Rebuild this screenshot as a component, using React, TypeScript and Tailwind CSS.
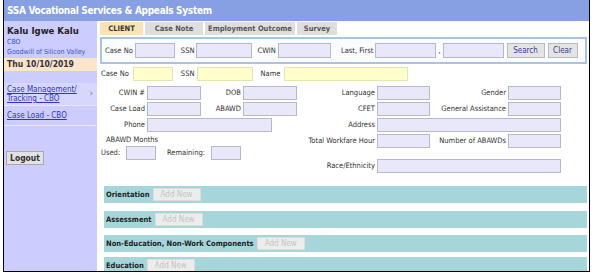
import React from "react";

const font = { fontFamily: '"DejaVu Sans Condensed", "Liberation Sans Narrow", "Liberation Sans", sans-serif' };

function Field({ w, h = "h-[14px]", yellow = false }: { w: string; h?: string; yellow?: boolean }) {
  return (
    <div
      className={`${w} ${h} border ${
        yellow ? "border-[#e8e4b0] bg-[#ffffcc]" : "border-[#b8b8cc] bg-[#e8e8fa]"
      }`}
    />
  );
}

function Row({ label, lw, fw, gap = "mr-[2px]" }: { label: string; lw: string; fw: string; gap?: string }) {
  return (
    <div className="flex items-center">
      <span className={`${lw} ${gap} text-right`}>{label}</span>
      <Field w={fw} />
    </div>
  );
}

const sections = [
  { name: "Orientation", mt: "mt-[13px]" },
  { name: "Assessment", mt: "mt-[8px]" },
  { name: "Non-Education, Non-Work Components", mt: "mt-[7px]" },
  { name: "Education", mt: "mt-[5px]" },
];

export default function App() {
  return (
    <div className="h-[275px] w-[595px] overflow-hidden bg-white" style={font}>
      <div className="ml-[3px] flex h-[272px] w-[587px] flex-col overflow-hidden border-x border-b border-black">
        <div className="flex h-[21px] shrink-0 items-center bg-[#879fe3] pl-[3px] text-[10px] font-bold tracking-[-0.3px] text-white">
          SSA Vocational Services &amp; Appeals System
        </div>

        <div className="flex flex-1">
          {/* sidebar */}
          <aside className="flex w-[93px] shrink-0 flex-col bg-[#ccccff] text-[#222]">
            <div className="pl-[3px] pt-[4px] text-[9.5px] font-bold leading-[12px]">Kalu Igwe Kalu</div>
            <div className="pl-[3px] text-[7px] leading-[10px] text-[#3355cc]">CBO</div>
            <div className="pl-[3px] text-[7px] leading-[10px] text-[#3355cc]">Goodwill of Silicon Valley</div>
            <div className="mt-[1px] h-[13px] bg-[#fde5c9] pl-[3px] text-[8.5px] font-bold leading-[13px] text-[#333]">
              Thu 10/10/2019
            </div>
            <div className="mt-[12px] flex items-center border-b border-[#e6e6ff] bg-[#d6d6ff] py-[2px] pl-[3px] pr-[4px]">
              <div className="flex-1 text-[8px] leading-[9px] text-[#3333cc] underline">
                Case Management/
                <br />
                Tracking - CBO
              </div>
              <span className="text-[9px] text-[#777]">›</span>
            </div>
            <div className="border-b border-[#e6e6ff] py-[5px] pl-[3px] text-[8px] leading-[9px] text-[#3333cc] underline">
              Case Load - CBO
            </div>
            <div className="ml-[2px] mt-[25px] flex h-[14px] w-[38px] items-center justify-center border border-[#aaa] bg-[#e2e2e2] text-[8.5px] font-bold text-[#333]">
              Logout
            </div>
          </aside>

          {/* main */}
          <main className="ml-[3px] flex-1 text-[7.5px] text-[#333]">
            <div className="mt-[1px] flex gap-[2px] text-[7.5px] font-bold">
              <div className="flex h-[13px] w-[43px] items-center justify-center bg-[#fce3b6] text-[#333]">CLIENT</div>
              <div className="flex h-[13px] w-[58px] items-center justify-center bg-[#dedede] text-[#555]">Case Note</div>
              <div className="flex h-[13px] w-[90px] items-center justify-center bg-[#dedede] text-[#555]">Employment Outcome</div>
              <div className="flex h-[13px] w-[40px] items-center justify-center bg-[#dedede] text-[#555]">Survey</div>
            </div>

            <div className="mr-[2px] mt-[2px] flex h-[27px] items-center border-2 border-[#a9c3e6] bg-[#fbfcff] pl-[3px]">
              <span className="mr-[2px]">Case No</span>
              <Field w="w-[40px]" h="h-[15px]" />
              <span className="ml-[6px] mr-[2px]">SSN</span>
              <Field w="w-[56px]" h="h-[15px]" />
              <span className="ml-[5px] mr-[2px]">CWIN</span>
              <Field w="w-[53px]" h="h-[15px]" />
              <span className="ml-[10px] mr-[2px]">Last, First</span>
              <Field w="w-[61px]" h="h-[15px]" />
              <span className="mx-[2px]">,</span>
              <Field w="w-[61px]" h="h-[15px]" />
              <div className="ml-[3px] flex h-[15px] w-[38px] items-center justify-center border border-[#bbb] bg-[#e4e4e4] text-[8px] text-[#3a3a99]">
                Search
              </div>
              <div className="ml-[3px] flex h-[15px] w-[30px] items-center justify-center border border-[#bbb] bg-[#e4e4e4] text-[8px] text-[#3a3a99]">
                Clear
              </div>
            </div>

            <div className="mt-[3px] flex items-center">
              <span className="ml-[1px] mr-[4px]">Case No</span>
              <Field w="w-[40px]" yellow />
              <span className="ml-[8px] mr-[3px]">SSN</span>
              <Field w="w-[56px]" yellow />
              <span className="ml-[7px] mr-[4px]">Name</span>
              <Field w="w-[124px]" yellow />
            </div>

            <div className="mt-[5px] flex">
              <div className="flex w-[200px] flex-col gap-[2px]">
                <div className="flex">
                  <Row label="CWIN #" lw="w-[45px]" fw="w-[54px]" />
                  <Row label="DOB" lw="w-[40px]" fw="w-[54px]" />
                </div>
                <div className="flex">
                  <Row label="Case Load" lw="w-[45px]" fw="w-[54px]" />
                  <Row label="ABAWD" lw="w-[40px]" fw="w-[54px]" />
                </div>
                <Row label="Phone" lw="w-[45px]" fw="w-[125px]" />
                <div className="ml-[6px] mt-[2px] leading-[8px]">ABAWD Months</div>
                <div className="flex items-center">
                  <span className="ml-[1px] w-[25px]">Used:</span>
                  <Field w="w-[30px]" />
                  <span className="ml-[11px] w-[44px]">Remaining:</span>
                  <Field w="w-[30px]" />
                </div>
              </div>
              <div className="flex flex-col gap-[2px]">
                <div className="flex">
                  <Row label="Language" lw="w-[75px]" fw="w-[53px]" />
                  <Row label="Gender" lw="w-[76px]" fw="w-[53px]" />
                </div>
                <div className="flex">
                  <Row label="CFET" lw="w-[75px]" fw="w-[53px]" />
                  <Row label="General Assistance" lw="w-[76px]" fw="w-[53px]" />
                </div>
                <Row label="Address" lw="w-[75px]" fw="w-[184px]" />
                <div className="flex">
                  <Row label="Total Workfare Hour" lw="w-[75px]" fw="w-[53px]" />
                  <Row label="Number of ABAWDs" lw="w-[76px]" fw="w-[53px]" />
                </div>
                <div className="mt-[9px]">
                  <Row label="Race/Ethnicity" lw="w-[75px]" fw="w-[184px]" />
                </div>
              </div>
            </div>

            <div className="ml-[4px] mr-[2px] flex flex-col">
              {sections.map((s) => (
                <div key={s.name} className={`${s.mt} flex h-[17px] shrink-0 items-center bg-[#a6d6da] pl-[2px]`}>
                  <span className="text-[7.5px] font-bold text-[#222]">{s.name}</span>
                  <div className="ml-[3px] flex h-[13px] w-[48px] items-center justify-center border border-[#dcdcdc] bg-[#ececec] text-[8px] text-[#c4c4c4]">
                    Add New
                  </div>
                </div>
              ))}
            </div>
          </main>
        </div>
      </div>
    </div>
  );
}
